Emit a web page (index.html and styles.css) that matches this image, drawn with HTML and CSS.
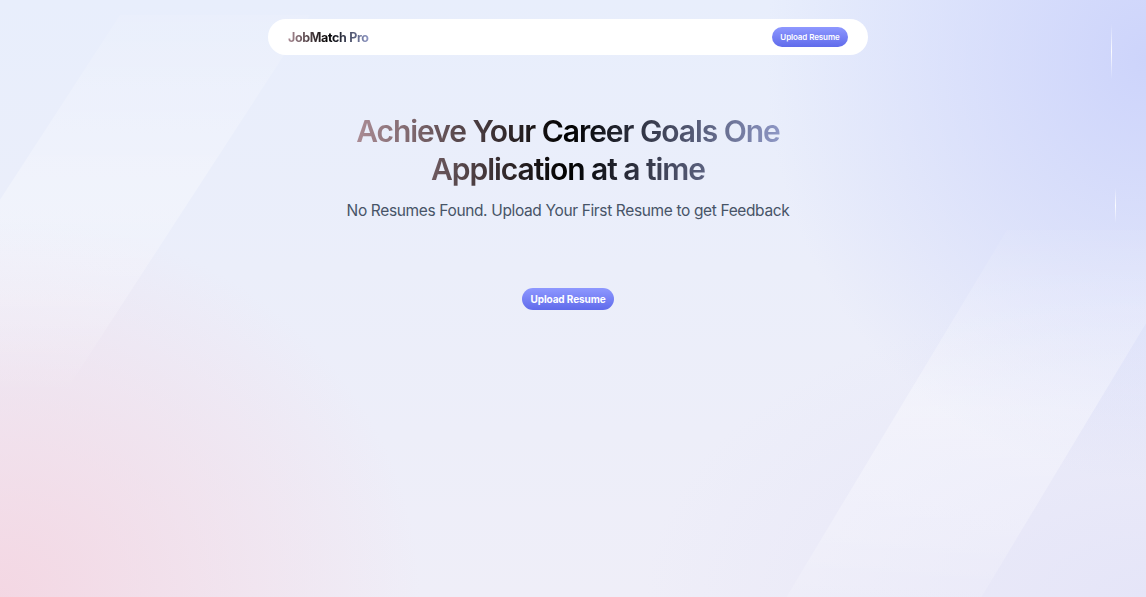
FILE: index.html
```html
<!DOCTYPE html>
<html lang="en">
<head>
<meta charset="utf-8">
<title>JobMatch Pro</title>
<link rel="stylesheet" href="styles.css">
</head>
<body>
<div class="bg" aria-hidden="true">
  <div class="band band-left"></div>
  <div class="band band-right"></div>
  <div class="streak streak-1"></div>
  <div class="streak streak-2"></div>
</div>
<main class="page">
  <nav class="navbar">
    <a class="logo text-gradient" href="#">JobMatch Pro</a>
    <a class="btn btn-small" href="#">Upload Resume</a>
  </nav>
  <section class="hero">
    <h1 class="title text-gradient">Achieve Your Career Goals One<br>Application at a time</h1>
    <h2 class="subtitle">No Resumes Found. Upload Your First Resume to get Feedback</h2>
    <a class="btn btn-main" href="#">Upload Resume</a>
  </section>
</main>
</body>
</html>
```
FILE: styles.css
```css
* { box-sizing: border-box; }
html, body { margin: 0; height: 100%; }
body {
  font-family: Inter, "Noto Sans", "Liberation Sans", sans-serif;
  overflow: hidden;
  position: relative;
  background:
    radial-gradient(ellipse 420px 380px at 0% 100%, rgba(244, 214, 226, 0.95), rgba(244, 214, 226, 0) 100%),
    radial-gradient(ellipse 380px 420px at 100% 10%, rgba(205, 212, 251, 1), rgba(205, 212, 251, 0) 100%),
    radial-gradient(ellipse 500px 300px at 100% 100%, rgba(228, 228, 248, 0.9), rgba(228, 228, 248, 0) 100%),
    linear-gradient(180deg, #e8eefc 0%, #ebeefa 45%, #efeef8 100%);
}
.bg { position: absolute; inset: 0; pointer-events: none; overflow: hidden; }
.band {
  position: absolute;
  transform-origin: top left;
}
.band-left {
  left: 120px; top: 15px; width: 190px; height: 380px;
  transform: skewX(-33deg);
  background: linear-gradient(180deg, rgba(255,255,255,0.08), rgba(255,255,255,0.3) 45%, rgba(255,255,255,0.22) 75%, rgba(255,255,255,0));
}
.band-right {
  left: 1007px; top: 230px; width: 195px; height: 400px;
  transform: skewX(-31deg);
  background: linear-gradient(180deg, rgba(255,255,255,0.05), rgba(255,255,255,0.35) 45%, rgba(255,255,255,0.25) 75%, rgba(255,255,255,0.05));
}
.streak { position: absolute; width: 1px; background: linear-gradient(180deg, rgba(255,255,255,0), rgba(255,255,255,0.9), rgba(255,255,255,0)); }
.streak-1 { left: 1111px; top: 24px; height: 55px; }
.streak-2 { left: 1115px; top: 188px; height: 35px; }

.page {
  position: relative;
  width: 1136px;
  padding-top: 19px;
  display: flex;
  flex-direction: column;
  align-items: center;
}
.navbar {
  width: 600px;
  height: 36px;
  background: #fff;
  border-radius: 18px;
  padding: 0 20px;
  display: flex;
  align-items: center;
  justify-content: space-between;
}
.text-gradient {
  background: linear-gradient(to right, #ab8c95, #000000, #8e97c5);
  -webkit-background-clip: text;
  background-clip: text;
  color: transparent;
}
.logo {
  font-size: 12.5px;
  font-weight: 700;
  text-decoration: none;
  letter-spacing: -0.35px;
}
.btn {
  display: inline-flex;
  align-items: center;
  justify-content: center;
  color: #fff;
  text-decoration: none;
  border-radius: 999px;
  background: linear-gradient(to bottom, #8e98ff, #606beb);
  font-weight: 600;
}
.btn-small { width: 76px; height: 20px; font-size: 8px; letter-spacing: -0.1px; }
.hero {
  display: flex;
  flex-direction: column;
  align-items: center;
  padding-top: 57px;
}
.title {
  margin: 0;
  font-size: 30px;
  line-height: 38px;
  font-weight: 600;
  text-align: center;
  letter-spacing: -1.05px;
  width: fit-content;
}
.subtitle {
  margin: 13px 0 0;
  font-size: 15.5px;
  font-weight: 400;
  line-height: 20px;
  color: #475467;
  letter-spacing: -0.36px;
}
.btn-main { margin-top: 67px; width: 92px; height: 22px; font-size: 10px; font-weight: 700; letter-spacing: -0.1px; }
```
